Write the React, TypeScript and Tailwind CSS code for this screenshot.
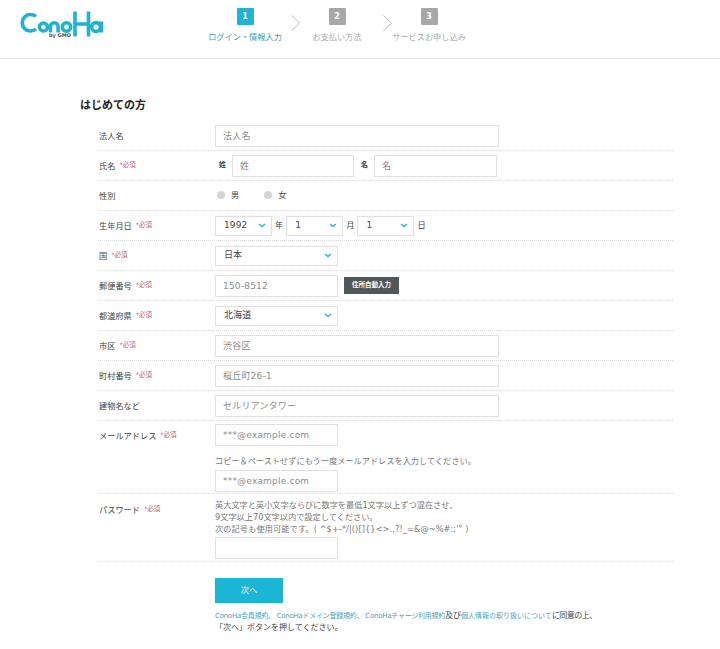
import React from "react";

const font = { fontFamily: '"DejaVu Sans","Noto Sans CJK JP",sans-serif' };

function Req() {
  return <span className="text-[6.5px] text-[#b8607c] ml-[4px] whitespace-nowrap">*必須</span>;
}

function Label({ text, req }: { text: string; req?: boolean }) {
  return (
    <div className="w-[117px] shrink-0 pl-[1px] pt-[1px] text-[8.2px] text-[#444] flex items-center whitespace-nowrap">
      {text}
      {req && <Req />}
    </div>
  );
}

function Row({ text, req, children }: { text: string; req?: boolean; children?: React.ReactNode }) {
  return (
    <div className="h-[30px] flex items-center border-b border-dotted border-[#d8d8d8]">
      <Label text={text} req={req} />
      <div className="flex items-center">{children}</div>
    </div>
  );
}

function Field({ w, ph }: { w: string; ph: string }) {
  return (
    <input
      placeholder={ph}
      className={`${w} block h-[22px] bg-white border border-[#e0e0e0] px-[7px] text-[9px] tracking-[0.2px] outline-none placeholder:text-[#8c8c8c]`}
    />
  );
}

function Sel({ w, value }: { w: string; value: string }) {
  return (
    <div className={`${w} h-[20px] border border-[#e0e0e0] flex items-center justify-between pl-[8px] pr-[5px] text-[9px] tracking-[0.1px] text-[#444]`}>
      <span>{value}</span>
      <svg width="8" height="5" viewBox="0 0 8 5" fill="none" stroke="#2db4cf" strokeWidth="1.4">
        <path d="M1 1l3 2.6L7 1" />
      </svg>
    </div>
  );
}

function Step({ n, label, active }: { n: number; label: string; active?: boolean }) {
  return (
    <div className="w-[76px] flex flex-col items-center">
      <div className={`w-[17px] h-[17px] rounded-[1px] flex items-center justify-center text-white text-[8px] font-bold ${active ? "bg-[#21b3d1]" : "bg-[#a8a8a8]"}`}>
        {n}
      </div>
      <div className={`mt-[6px] text-[8.2px] leading-[12px] whitespace-nowrap ${active ? "text-[#3a9fb5]" : "text-[#aaa]"}`}>{label}</div>
    </div>
  );
}

function Arrow() {
  return (
    <svg width="9" height="16" viewBox="0 0 9 16" fill="none" stroke="#bbb" strokeWidth="1" className="ml-[8px] mr-[-1px] mt-[7px] shrink-0">
      <path d="M0.5 0.5l8 7.5-8 7.5" />
    </svg>
  );
}

function Logo() {
  return (
    <svg width="84" height="27" viewBox="0 0 84 27" fill="none" stroke="#1fb2d2" strokeWidth="3.6" className="shrink-0">
      <path d="M16 5.5A8.3 8.3 0 1 0 16 18" />
      <circle cx="23.5" cy="16" r="4" />
      <path d="M30.5 21.5V15.5a3.8 3.8 0 0 1 7.6 0v6" />
      <circle cx="46.5" cy="16" r="4.2" />
      <path d="M55 0.5v25M68.5 0.5v25M55 13h13.5" />
      <circle cx="76" cy="16" r="4.4" />
      <path d="M81.4 10.5V21.5" />
      <text x="29" y="26" fontSize="5" fontWeight="700" fill="#4a4a4a" stroke="none" style={font}>by GMO</text>
    </svg>
  );
}

export default function App() {
  return (
    <div style={font} className="w-[720px] h-[649px] overflow-hidden bg-white text-[#444]">
      <header className="h-[59px] border-b border-[#e4e4e4] flex">
        <div className="pl-[20px] pt-[11px] w-[207px] shrink-0">
          <Logo />
        </div>
        <div className="flex pt-[8px] items-start">
          <Step n={1} label="ログイン・情報入力" active />
          <Arrow />
          <Step n={2} label="お支払い方法" />
          <Arrow />
          <Step n={3} label="サービスお申し込み" />
        </div>
      </header>

      <main className="pl-[80px] pt-[40px]">
        <h2 className="text-[11px] leading-[14px] font-bold text-[#222]">はじめての方</h2>
        <div className="ml-[18px] w-[575px] mt-[8px]">
          <Row text="法人名"><Field w="w-[284px]" ph="法人名" /></Row>
          <Row text="氏名" req>
            <span className="text-[7px] font-bold ml-[4px] w-[13px]">姓</span>
            <Field w="w-[122px]" ph="姓" />
            <span className="text-[7px] font-bold ml-[7px] w-[13px]">名</span>
            <Field w="w-[123px]" ph="名" />
          </Row>
          <Row text="性別">
            <span className="w-[8px] h-[8px] rounded-full bg-[#d4d4d4] ml-[2px]" />
            <span className="text-[8.2px] ml-[6px]">男</span>
            <span className="w-[8px] h-[8px] rounded-full bg-[#d4d4d4] ml-[25px]" />
            <span className="text-[8.2px] ml-[6px]">女</span>
          </Row>
          <Row text="生年月日" req>
            <Sel w="w-[57px]" value="1992" />
            <span className="text-[8.2px] mx-[3px]">年</span>
            <Sel w="w-[57px]" value="1" />
            <span className="text-[8.2px] mx-[3px]">月</span>
            <Sel w="w-[57px]" value="1" />
            <span className="text-[8.2px] ml-[3px]">日</span>
          </Row>
          <Row text="国" req><Sel w="w-[123px]" value="日本" /></Row>
          <Row text="郵便番号" req>
            <Field w="w-[123px]" ph="150-8512" />
            <button className="ml-[6px] w-[55px] h-[17px] bg-[#4f5759] text-white text-[6.5px] font-bold">住所自動入力</button>
          </Row>
          <Row text="都道府県" req><Sel w="w-[123px]" value="北海道" /></Row>
          <Row text="市区" req><Field w="w-[284px]" ph="渋谷区" /></Row>
          <Row text="町村番号" req><Field w="w-[284px]" ph="桜丘町26-1" /></Row>
          <Row text="建物名など"><Field w="w-[284px]" ph="セルリアンタワー" /></Row>

          <div className="h-[73px] flex border-b border-dotted border-[#d8d8d8]">
            <div className="pt-[7px] h-[22px] flex"><Label text="メールアドレス" req /></div>
            <div className="pt-[3px]">
              <Field w="w-[123px]" ph="***@example.com" />
              <p className="text-[8.2px] leading-[12px] mt-[9px] mb-[3px] text-[#777] whitespace-nowrap">コピー＆ペーストせずにもう一度メールアドレスを入力してください。</p>
              <Field w="w-[123px]" ph="***@example.com" />
            </div>
          </div>

          <div className="h-[68px] flex border-b border-dotted border-[#d8d8d8]">
            <div className="pt-[9px] h-[22px] flex"><Label text="パスワード" req /></div>
            <div className="pt-[5px]">
              <p className="text-[8.2px] leading-[12px] text-[#777] whitespace-nowrap">
                英大文字と英小文字ならびに数字を最低1文字以上ずつ混在させ、<br />
                9文字以上70文字以内で設定してください。<br />
                <span className="tracking-[0.1px]">次の記号も使用可能です。( ^$+-*/|()[]{"{}"}&lt;&gt;.,?!_=&amp;@~%#:;'" )</span>
              </p>
              <div className="mt-[2px]"><Field w="w-[123px]" ph="" /></div>
            </div>
          </div>

          <div className="pl-[117px]">
            <button className="block mt-[16px] w-[68px] h-[25px] bg-[#1bb5d6] text-white text-[8.2px]">次へ</button>
            <p className="mt-[7px] text-[8px] leading-[12px] whitespace-nowrap text-[#444]">
              <span className="text-[#4aa3bd] text-[7px] tracking-[-0.25px]">ConoHa会員規約、 ConoHaドメイン登録規約、 ConoHaチャージ利用規約</span>
              及び
              <span className="text-[#4aa3bd] text-[7px]">個人情報の取り扱いについて</span>
              <span className="tracking-[-0.5px]">に同意の上、</span><br />
              「次へ」ボタンを押してください。
            </p>
          </div>
        </div>
      </main>
    </div>
  );
}
